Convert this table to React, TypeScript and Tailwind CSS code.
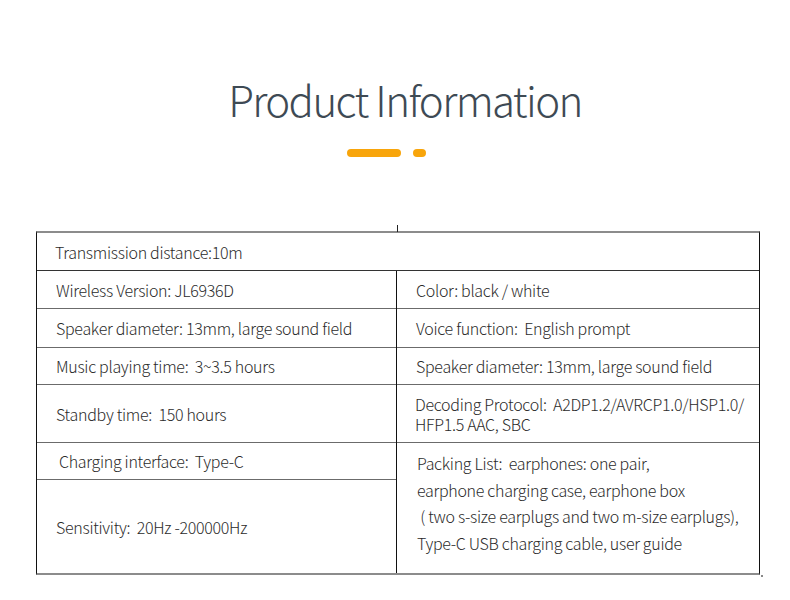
import React from 'react';

type Cell = { h: string; text: React.ReactNode; pad?: string };

const leftCells: Cell[] = [
  { h: 'h-[38px]', text: 'Wireless Version: JL6936D' },
  { h: 'h-[39px]', text: 'Speaker diameter: 13mm, large sound field' },
  { h: 'h-[37px]', text: 'Music playing time:  3~3.5 hours' },
  { h: 'h-[58px]', text: 'Standby time:  150 hours' },
  { h: 'h-[37px]', text: 'Charging interface:  Type-C', pad: 'pl-[22px]' },
  { h: 'h-[93px]', text: 'Sensitivity:  20Hz -200000Hz' },
];

const rightCells: Cell[] = [
  { h: 'h-[38px]', text: 'Color: black / white' },
  { h: 'h-[39px]', text: 'Voice function:  English prompt' },
  { h: 'h-[37px]', text: 'Speaker diameter: 13mm, large sound field' },
  {
    h: 'h-[58px]',
    text: (
      <span className="block leading-[20px] -ml-[1px]">
        {'Decoding Protocol:  A2DP1.2/AVRCP1.0/HSP1.0/'}
        <br />
        HFP1.5 AAC, SBC
      </span>
    ),
  },
];

const Row: React.FC<{ cell: Cell; last?: boolean }> = ({ cell, last }) => (
  <div
    className={`${cell.h} flex items-center ${cell.pad ?? 'pl-[19px]'} ${
      last ? '' : 'border-b border-[#6b6b6b]'
    }`}
  >
    {cell.text}
  </div>
);

export default function App() {
  return (
    <div
      className="w-[790px] h-[600px] bg-white relative text-[#2b2b2b]"
      style={{ fontFamily: '"Noto Sans CJK SC", "Noto Sans", sans-serif' }}
    >
      {/* Heading */}
      <div className="pt-[71px] flex flex-col items-center">
        <h1 className="pl-[20px] text-[42px] font-light leading-[56px] text-[#3e4a54] tracking-[-1.6px]">
          Product Information
        </h1>
        <div className="mt-[22px] mr-[18px] flex items-center gap-[12px]">
          <span className="block w-[54px] h-[8px] rounded-full bg-[#f8a50b]" />
          <span className="block w-[13px] h-[8px] rounded-full bg-[#f8a50b]" />
        </div>
      </div>

      {/* Spec table */}
      <div className="absolute left-[397px] top-[225px] w-[1px] h-[7px] bg-[#222]" />
      <div className="mt-[74px] ml-[36px] w-[724px] text-[16px] font-light whitespace-pre tracking-[-0.3px] border-t-2 border-t-[#8c8c8c] border-x border-x-[#111] border-b-2 border-b-[#8c8c8c]">
        <div className="h-[38px] flex items-center pl-[18px] border-b border-[#333]">
          Transmission distance:10m
        </div>
        <div className="grid grid-cols-[360px_1fr]">
          <div className="flex flex-col border-r border-[#111]">
            {leftCells.map((c, i) => (
              <Row key={i} cell={c} last={i === leftCells.length - 1} />
            ))}
          </div>
          <div className="flex flex-col">
            {rightCells.map((c, i) => (
              <Row key={i} cell={c} />
            ))}
            <div className="h-[130px] pl-[20px] pt-[7px] leading-[26.5px]">
              {'Packing List:  earphones: one pair,'}
              <br />
              earphone charging case, earphone box
              <br />
              {' ( two s-size earplugs and two m-size earplugs),'}
              <br />
              Type-C USB charging cable, user guide
            </div>
          </div>
        </div>
      </div>
      <div className="absolute left-[761px] top-[575px] w-[2px] h-[2px] bg-[#888]" />
    </div>
  );
}
